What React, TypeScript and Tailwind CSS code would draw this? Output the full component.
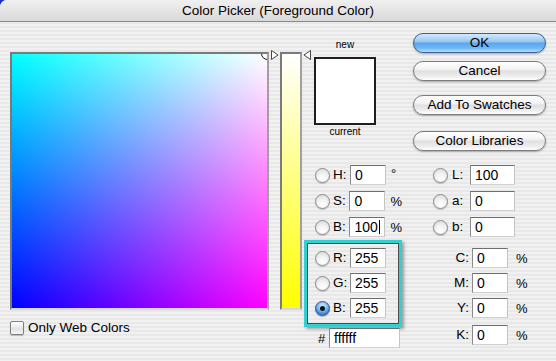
import React from "react";

const FONT = "font-['Liberation_Sans','Arial',sans-serif]";

function Radio({ checked = false }: { checked?: boolean }) {
  return checked ? (
    <div className="w-[15px] h-[15px] rounded-full border border-[#2d4f8c] bg-[radial-gradient(circle_at_50%_30%,#d8ecff_0%,#7db8f0_45%,#2f7fdc_75%,#6fb4f2_100%)] shadow-[0_1px_1px_rgba(0,0,0,0.25)] flex items-center justify-center shrink-0">
      <div className="w-[5px] h-[5px] rounded-full bg-[#111]" />
    </div>
  ) : (
    <div className="w-[15px] h-[15px] rounded-full border border-[#8a8a8a] bg-[radial-gradient(circle_at_50%_75%,#ffffff_0%,#f4f4f4_40%,#d6d6d6_100%)] shadow-[0_1px_1px_rgba(0,0,0,0.2)] shrink-0" />
  );
}

function Field({ value, w, caret = false }: { value: string; w: string; caret?: boolean }) {
  return (
    <div
      className={`${w} h-[20px] bg-white border border-t-[#6e6e6e] border-l-[#8a8a8a] border-r-[#c4c4c4] border-b-[#d0d0d0] flex items-center pl-[4px] text-[14px] text-black leading-none shrink-0`}
    >
      <span>{value}</span>
      {caret && <span className="inline-block w-[1px] h-[14px] bg-black ml-[1px]" />}
    </div>
  );
}

function LeftRow({ label, value, unit, checked, caret }: { label: string; value: string; unit?: string; checked?: boolean; caret?: boolean }) {
  return (
    <div className="flex items-center h-[20px]">
      <Radio checked={checked} />
      <div className="w-[20px] pl-[3px] text-[13.5px] leading-none">{label}</div>
      <Field value={value} w="w-[36px]" caret={caret} />
      {unit !== undefined && (
        <div className={`ml-[5px] text-[13px] leading-none ${unit === "°" ? "self-start pt-[2px] text-[11px]" : ""}`}>{unit}</div>
      )}
    </div>
  );
}

function LabRow({ label, value }: { label: string; value: string }) {
  return (
    <div className="flex items-center h-[20px]">
      <Radio />
      <div className="w-[22px] pl-[4px] text-[13.5px] leading-none">{label}</div>
      <Field value={value} w="w-[45px]" />
    </div>
  );
}

function CmykRow({ label, value }: { label: string; value: string }) {
  return (
    <div className="flex items-center h-[20px]">
      <div className="w-[39px] pr-[3px] text-right text-[13.5px] leading-none">{label}</div>
      <Field value={value} w="w-[36px]" />
      <div className="ml-[8px] text-[13px] leading-none">%</div>
    </div>
  );
}

function AquaButton({ label, primary = false, cls = "" }: { label: string; primary?: boolean; cls?: string }) {
  return (
    <div
      className={`${cls} h-[20px] w-[133px] rounded-full border flex items-center justify-center text-[13.5px] leading-none text-black shadow-[0_1px_2px_rgba(0,0,0,0.3)] ${
        primary
          ? "border-[#3d5d93] bg-[linear-gradient(to_bottom,#d3e9fd_0%,#9ccaf4_40%,#5ea6ec_52%,#6db7f6_78%,#b3e2ff_100%)]"
          : "border-[#7c7c7c] bg-[linear-gradient(to_bottom,#ffffff_0%,#f3f3f3_40%,#e0e0e0_52%,#eeeeee_80%,#ffffff_100%)]"
      }`}
    >
      {label}
    </div>
  );
}

export default function App() {
  return (
    <div className={`w-[556px] h-[361px] bg-[#1b34c8] overflow-hidden text-black ${FONT}`}>
      <div className="w-full h-full rounded-tl-[7px] overflow-hidden flex flex-col bg-[repeating-linear-gradient(180deg,#f1f1f1_0px,#f1f1f1_2px,#e8e8e8_2px,#e8e8e8_4px)]">
        {/* title bar */}
        <div className="h-[22px] shrink-0 border-b border-[#8a8a8a] bg-[linear-gradient(to_bottom,#f0f0f0,#d9d9d9)] flex items-center justify-center text-[13.5px] leading-none">
          Color Picker (Foreground Color)
        </div>

        <div className="flex flex-row">
          {/* color field */}
          <div className="pl-[10px] pt-[30px] flex flex-col">
            <div className="relative w-[259px] h-[258px] border-2 border-[#7a7a7a] border-r-[#a0a0a0] border-b-[#d8d8d8] overflow-hidden bg-[linear-gradient(to_bottom,#00ff00,#000000),linear-gradient(to_right,#0000ff,#ff00ff)] bg-blend-screen">
              <div className="absolute right-[-7px] top-[-7px] w-[13px] h-[13px] rounded-full border-[1.5px] border-[#111]" />
            </div>
            <div className="mt-[11px] flex items-center h-[14px]">
              <div className="w-[14px] h-[14px] rounded-[2px] border border-[#7e7e7e] bg-[linear-gradient(to_bottom,#ffffff,#e2e2e2_60%,#f7f7f7)] shadow-[0_1px_1px_rgba(0,0,0,0.2)]" />
              <div className="ml-[4px] text-[13.5px] leading-none">Only Web Colors</div>
            </div>
          </div>

          {/* slider */}
          <div className="relative ml-[11px] mt-[30px] w-[22px] h-[258px] border-2 border-[#7a7a7a] border-r-[#a0a0a0] border-b-[#d8d8d8] bg-[linear-gradient(to_bottom,#ffffff,#ffff00)]">
            <svg className="absolute left-[-11px] top-[-4px]" width="8" height="10" viewBox="0 0 8 10">
              <path d="M0.5 0.5 L7 5 L0.5 9.5 Z" fill="#fff" stroke="#444" strokeWidth="1" />
            </svg>
            <svg className="absolute right-[-11px] top-[-4px]" width="8" height="10" viewBox="0 0 8 10">
              <path d="M7.5 0.5 L1 5 L7.5 9.5 Z" fill="#fff" stroke="#444" strokeWidth="1" />
            </svg>
          </div>

          {/* right side */}
          <div className="ml-[2px] flex flex-col">
            <div className="flex flex-row items-start">
              <div className="ml-[10px] mt-[16px] w-[62px] flex flex-col items-center text-[10px] leading-[13px]">
                <div>new</div>
                <div className="mt-[6px] w-[62px] h-[68px] border-2 border-[#1e1e1e] bg-white" />
                <div>current</div>
              </div>
              <div className="ml-[37px] mt-[11px] flex flex-col">
                <AquaButton label="OK" primary />
                <AquaButton label="Cancel" cls="mt-[8px]" />
                <AquaButton label="Add To Swatches" cls="mt-[14px]" />
                <AquaButton label="Color Libraries" cls="mt-[16px]" />
              </div>
            </div>

            <div className="mt-[14px] flex flex-row items-start">
              {/* HSB / RGB */}
              <div className="w-[98px] flex flex-col">
                <div className="pl-[11px] flex flex-col gap-[6px]">
                  <LeftRow label="H:" value="0" unit="°" />
                  <LeftRow label="S:" value="0" unit="%" />
                  <LeftRow label="B:" value="100" unit="%" caret />
                </div>
                <div className="mt-[3px] w-[98px] border-[3px] border-[#36cfd0] shadow-[2px_2px_3px_rgba(0,0,0,0.35)]">
                  <div className="border border-[#4a4a4a] pl-[7px] pt-[4px] pb-[5px] flex flex-col gap-[5px]">
                    <LeftRow label="R:" value="255" />
                    <LeftRow label="G:" value="255" />
                    <LeftRow label="B:" value="255" checked />
                  </div>
                </div>
                <div className="mt-[1px] flex items-center h-[20px]">
                  <div className="w-[25px] pl-[14px] text-[13px] leading-none">#</div>
                  <Field value="ffffff" w="w-[71px]" />
                </div>
              </div>

              {/* Lab / CMYK */}
              <div className="ml-[31px] flex flex-col">
                <div className="flex flex-col gap-[6px]">
                  <LabRow label="L:" value="100" />
                  <LabRow label="a:" value="0" />
                  <LabRow label="b:" value="0" />
                </div>
                <div className="mt-[11px] flex flex-col gap-[5px]">
                  <CmykRow label="C:" value="0" />
                  <CmykRow label="M:" value="0" />
                  <CmykRow label="Y:" value="0" />
                </div>
                <div className="mt-[7px]">
                  <CmykRow label="K:" value="0" />
                </div>
              </div>
            </div>
          </div>
        </div>
      </div>
    </div>
  );
}
